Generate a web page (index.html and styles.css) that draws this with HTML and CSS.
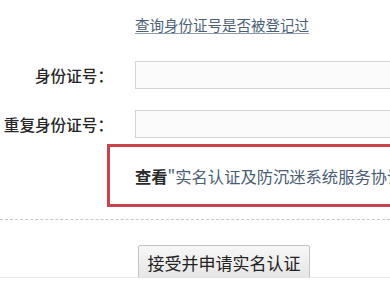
FILE: index.html
```html
<!DOCTYPE html>
<html lang="zh-CN">
<head>
<meta charset="utf-8">
<title>实名认证</title>
<link rel="stylesheet" href="styles.css">
</head>
<body>
<div class="page">
  <div class="query"><a href="#" class="query-link">查询身份证号是否被登记过</a></div>
  <div class="form">
    <label class="label" for="id1">身份证号：</label>
    <input class="field" id="id1" type="text">
    <label class="label" for="id2">重复身份证号：</label>
    <input class="field" id="id2" type="text">
  </div>
  <div class="notice">
    <span class="notice-text"><b class="view">查看</b><a href="#" class="notice-link">"实名认证及防沉迷系统服务协议"</a></span>
  </div>
  <div class="divider"></div>
  <div class="actions">
    <button class="submit" type="button">接受并申请实名认证</button>
  </div>
</div>
</body>
</html>
```

FILE: styles.css
```css
html, body {
  margin: 0;
  padding: 0;
  background: #ffffff;
  overflow: hidden;
}
body {
  width: 390px;
  height: 290px;
  font-family: "Noto Sans CJK SC", "Noto Sans", sans-serif;
  color: #222;
}
.page {
  height: 277px;
  overflow: hidden;
  border-bottom: 1px solid #e4e4e4;
  background: #fff;
}
.query {
  padding: 14px 0 0 135px;
  height: 20px;
  line-height: 20px;
}
.query-link {
  font-size: 14.5px;
  color: #4b6078;
  text-decoration: underline;
  text-decoration-color: #8a9cb0;
  text-underline-offset: 2px;
  white-space: nowrap;
}
.form {
  margin-top: 27px;
  display: grid;
  grid-template-columns: 113px 300px;
  column-gap: 22px;
  row-gap: 21px;
  align-items: center;
}
.label {
  text-align: right;
  font-size: 15.6px;
  color: #262626;
  white-space: nowrap;
  font-weight: 500;
}
.field {
  box-sizing: border-box;
  height: 28px;
  width: 300px;
  margin: 0;
  border: 1px solid #d4d4d4;
  background: #fbfbfb;
}
.notice {
  margin: 6px 0 0 107px;
  width: 400px;
  height: 57px;
  border: 3px solid #c8434b;
  display: flex;
  align-items: center;
  padding-left: 25px;
  white-space: nowrap;
}
.notice-text {
  font-size: 16.3px;
}
.view {
  color: #2a2a2a;
  font-weight: 700;
}
.notice-link {
  color: #4a5d74;
  text-decoration: none;
}
.divider {
  margin-top: 12px;
  border-top: 1px dashed #c8c8c8;
}
.actions {
  margin-top: 25px;
  padding-left: 138px;
}
.submit {
  box-sizing: border-box;
  width: 172px;
  height: 34px;
  margin: 0;
  padding: 0;
  border: 1px solid #c4c4c4;
  border-radius: 2px;
  background: linear-gradient(#f7f7f7, #e6e6e6);
  font-family: "Noto Sans CJK SC", sans-serif;
  font-size: 17px;
  color: #222;
  letter-spacing: 0;
}
```
